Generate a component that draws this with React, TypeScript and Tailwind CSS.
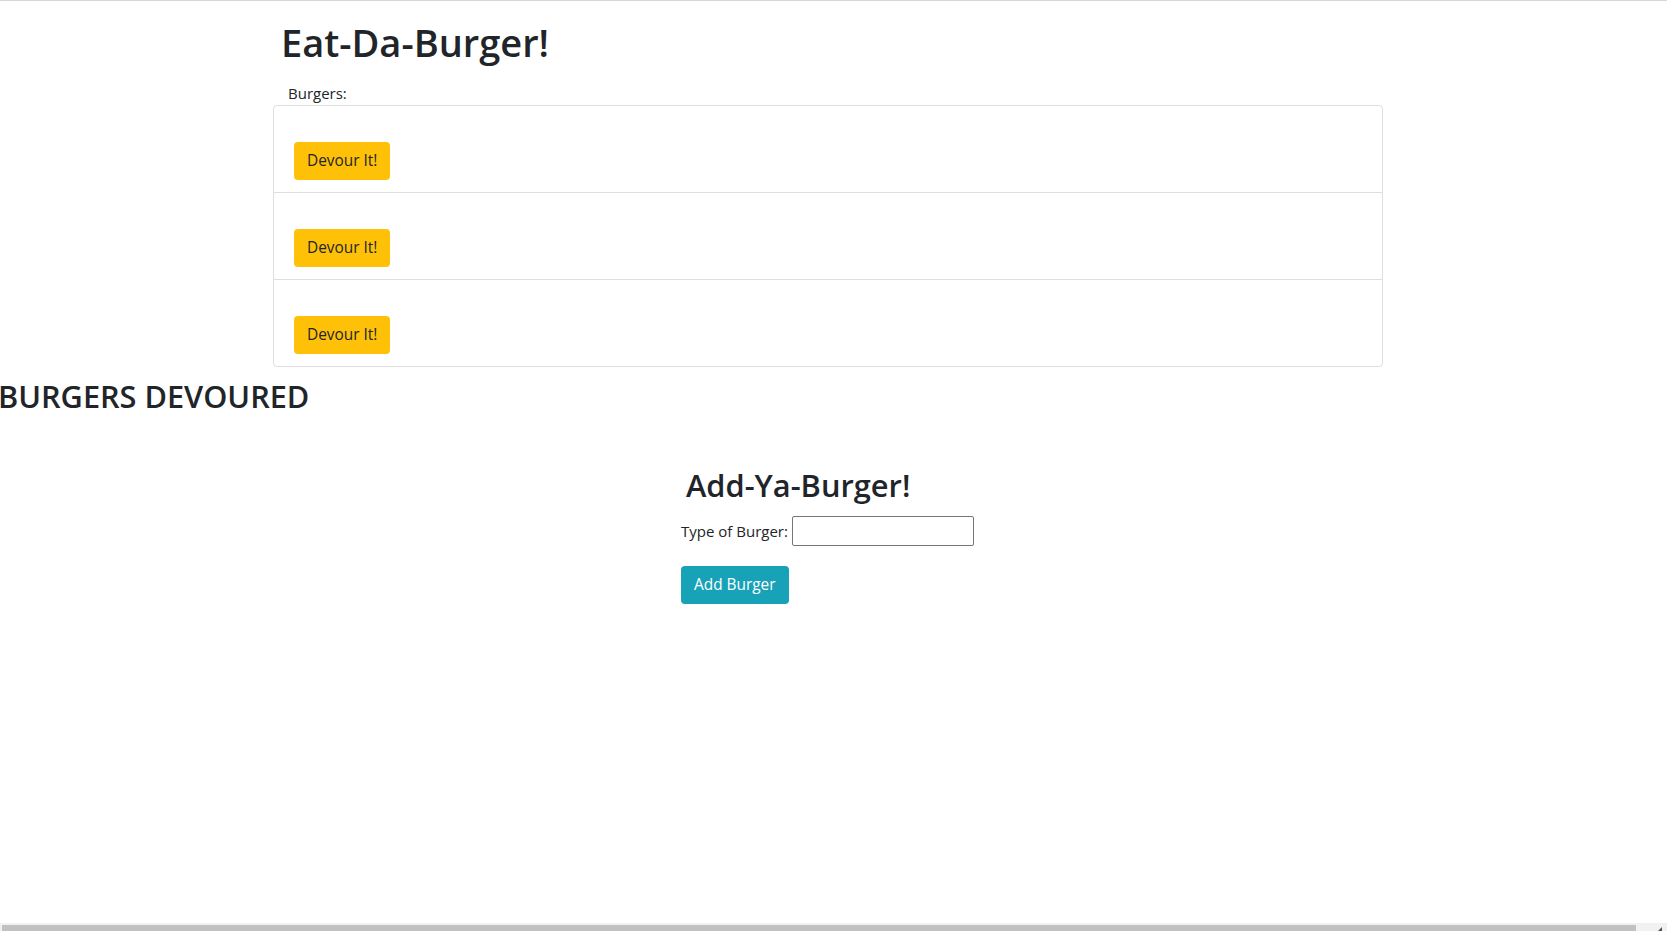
import React from "react";

function DevourItem() {
  return (
    <div className="border-b border-[#dfdfdf] px-[20px] py-[12px] last:border-b-0">
      <div className="h-[24px]"></div>
      <button className="rounded-[4px] border border-transparent bg-[#ffc107] px-[12px] py-[6px] text-[15.4px] leading-[24px] text-[#212529]">
        Devour It!
      </button>
    </div>
  );
}

export default function App() {
  return (
    <div className="relative min-h-[931px] w-full overflow-hidden border-t border-[#d6d6d6] bg-white text-[#212529] font-['Open_Sans',sans-serif]">
      <div className="ml-[273px] w-[1110px]">
        <h1 className="mt-[18px] mb-[16px] pl-[8px] text-[38px] font-semibold leading-[46px]">Eat-Da-Burger!</h1>
        <p className="pl-[15px] text-[15px] leading-[24px]">Burgers:</p>
        <div className="rounded-[4px] border border-[#dfdfdf]">
          <DevourItem />
          <DevourItem />
          <DevourItem />
        </div>
      </div>
      <h2 className="ml-[-2px] mt-[10px] text-[30.7px] font-semibold leading-[38px]">BURGERS DEVOURED</h2>
      <div className="ml-[681px] mt-[51px] flex flex-col items-start">
        <h2 className="pl-[5px] text-[30.8px] font-semibold leading-[38px]">Add-Ya-Burger!</h2>
        <div className="mt-[12px] flex items-center gap-[4px]">
          <label className="text-[15px] leading-[24px]">Type of Burger:</label>
          <input type="text" className="h-[30px] w-[182px] rounded-[2px] border border-[#767676] px-[4px]" />
        </div>
        <button className="mt-[20px] rounded-[4px] border border-transparent bg-[#17a2b8] px-[12px] py-[6px] text-[15.4px] leading-[24px] text-white">
          Add Burger
        </button>
      </div>
      <div className="fixed bottom-0 left-0 right-0 h-[8px] bg-[#f1f1f1]">
        <div className="absolute bottom-0 left-[2px] h-[6px] w-[1634px] bg-[#c1c1c1]"></div>
        <div className="absolute bottom-[0px] right-[5px] h-0 w-0 border-l-[4px] border-b-[4px] border-l-transparent border-b-[#505050]"></div>
      </div>
    </div>
  );
}
